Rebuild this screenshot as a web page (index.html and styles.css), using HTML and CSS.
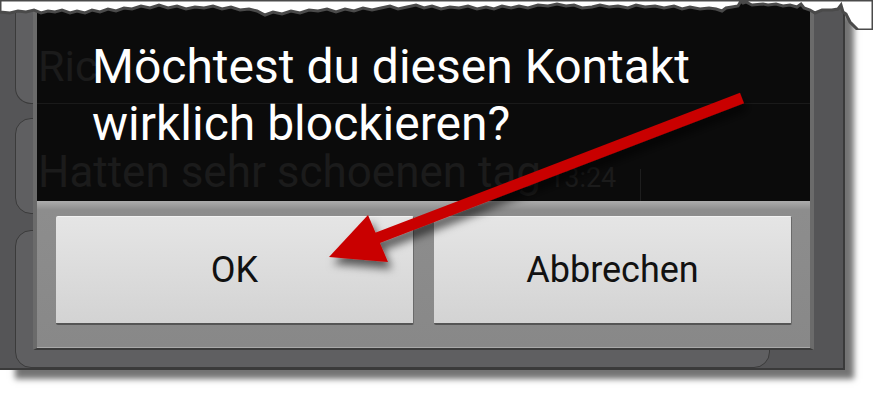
FILE: index.html
```html
<!DOCTYPE html>
<html lang="de">
<head>
    <meta charset="UTF-8">
    <meta name="viewport" content="width=device-width, initial-scale=1.0">
    <title>Kontakt blockieren</title>
    <link rel="stylesheet" href="styles.css">
</head>
<body>
    <div class="page">
        <div class="frame">
            <!-- list behind the dialog -->
            <div class="list">
                <div class="item item-top"></div>
                <div class="item item-mid"></div>
                <div class="item item-low"></div>
            </div>

            <div class="dialog">
                <div class="head">
                    <div class="ghost">
                        <div class="ghost-row first">Ric</div>
                        <div class="ghost-row second">
                            <span class="msg">Hatten sehr schoenen tag</span>
                            <span class="time">13:24</span>
                            <span class="divider"></span>
                        </div>
                    </div>
                    <h1 class="title">Möchtest du diesen Kontakt<br>wirklich blockieren?</h1>
                </div>
                <div class="buttons">
                    <button class="btn">OK</button>
                    <button class="btn">Abbrechen</button>
                </div>
            </div>
        </div>

        <!-- torn top edge -->
        <svg class="torn" width="873" height="30" viewBox="0 0 873 30">
            <path d="M0 0 H873 V30 L858 30 L850 22 L846 14 L843 12 L841 5 L838 9 L832 10 L822 10 L815 13 L810 10 L804 8 L801 4 L797 7 L790 5 L783 6 L776 4 L768 5 L763 4 L752 5 L746 2 L743 3 L741 1 L738 6 L732 7 L726 8 L722 11 L716 9 L709 8 L700 9 L690 7 L682 9 L674 6 L664 8 L655 6 L645 7 L636 5 L628 8 L618 6 L609 7 L600 5 L592 7 L582 8 L574 5 L566 6 L557 4 L548 6 L538 5 L528 8 L519 6 L511 8 L502 6 L494 9 L486 7 L477 9 L468 6 L459 8 L450 7 L441 9 L432 6 L424 8 L416 5 L407 7 L398 9 L390 6 L381 8 L372 10 L363 8 L354 11 L345 9 L336 12 L327 9 L318 11 L309 10 L300 13 L291 11 L282 14 L273 12 L265 15 L257 11 L249 9 L240 10 L231 7 L222 9 L213 6 L204 8 L195 7 L186 9 L177 6 L168 8 L159 5 L150 8 L141 6 L132 9 L124 8 L116 11 L108 9 L100 12 L92 10 L85 13 L77 11 L70 13 L62 10 L55 12 L48 11 L41 13 L34 10 L26 12 L18 11 L10 13 L0 12 Z" fill="#fff" stroke="#4a4a4a" stroke-width="3"/>
        </svg>

        <!-- red arrow pointing to OK -->
        <svg class="arrow" width="873" height="400" viewBox="0 0 873 400">
            <defs>
                <filter id="shade" x="-20%" y="-20%" width="140%" height="160%">
                    <feDropShadow dx="4" dy="7" stdDeviation="4" flood-color="#000" flood-opacity="0.6"/>
                </filter>
            </defs>
            <g filter="url(#shade)" fill="#c90000">
                <line x1="742" y1="98" x2="372" y2="240" stroke="#c90000" stroke-width="11"/>
                <polygon points="329,257 368,215 388,262"/>
            </g>
        </svg>
    </div>
</body>
</html>
```

FILE: styles.css
```css
body {
    margin: 0;
    background: #fff;
    font-family: Roboto, "Noto Sans", sans-serif;
}
.page {
    position: relative;
    width: 873px;
    height: 400px;
    overflow: hidden;
}
.frame {
    display: grid;
    width: 843px;
    height: 368px;
    background: #555557;
    border-right: 2px solid #3a3a3a;
    border-bottom: 2px solid #3a3a3a;
    box-shadow: 12px 12px 6px -3px rgba(0,0,0,0.55);
}
.list,
.dialog {
    grid-area: 1 / 1;
}
.list {
    display: flex;
    flex-direction: column;
    padding-left: 15px;
    width: 755px;
}
.item {
    background: #5f5f61;
    border: 1px solid #3b3b3b;
    border-radius: 16px;
}
.item-top {
    height: 103px;
    border-top: none;
    border-radius: 0 0 16px 16px;
}
.item-mid { height: 94px; margin-top: 14px; }
.item-low { height: 136px; margin-top: 16px; }

.dialog {
    align-self: start;
    margin-left: 33px;
    width: 773px;
    height: 348px;
    border-left: 4px solid #6b6b6b;
    border-right: 4px solid #6b6b6b;
    border-bottom: 2px solid #3a3a3a;
    display: flex;
    flex-direction: column;
}
.head {
    display: grid;
    height: 201px;
    background: #0b0b0b;
}
.ghost,
.title {
    grid-area: 1 / 1;
}
.ghost {
    color: #1b1b1b;
    display: flex;
    flex-direction: column;
}
.ghost-row {
    padding-left: 1px;
}
.ghost-row.first {
    height: 62px;
    padding-top: 41px;
    font-size: 43px;
    line-height: 50px;
    border-bottom: 1px solid #1a1a1a;
    overflow: hidden;
}
.ghost-row.second {
    display: flex;
    align-items: baseline;
    height: 97px;
    font-size: 44px;
    line-height: 40px;
}
.ghost-row.second .msg {
    margin-top: 48px;
}
.time {
    font-size: 27px;
    margin-left: 8px;
}
.divider {
    align-self: flex-end;
    height: 32px;
    margin-left: 24px;
    border-left: 1px solid #1e1e1e;
}
.title {
    margin: 0;
    padding: 38px 0 0 55px;
    color: #fff;
    font-size: 48px;
    font-weight: 400;
    line-height: 57px;
}
.buttons {
    display: flex;
    gap: 20px;
    flex: 1;
    padding: 15px 18px 22px 19px;
    background: linear-gradient(#adadad, #8d8d8d 9px, #888 100%);
    border-bottom: 1px solid #a8a8a8;
}
.btn {
    flex: 1;
    height: 109px;
    padding: 0;
    font-family: Roboto, "Noto Sans", sans-serif;
    font-size: 36px;
    color: #111;
    background: linear-gradient(#e5e5e5, #d3d3d3);
    border: none;
    border-top: 1px solid #f2f2f2;
    border-right: 1px solid #6a6a6a;
    border-bottom: 2px solid #555;
    border-radius: 2px;
}
.torn {
    position: absolute;
    left: 0;
    top: 0;
}
.arrow {
    position: absolute;
    left: 0;
    top: 0;
    pointer-events: none;
}
```
